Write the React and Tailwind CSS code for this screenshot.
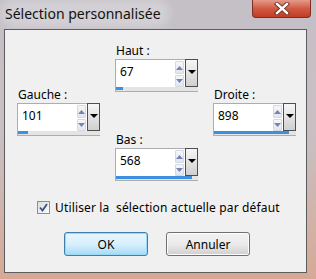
import React from "react";

// Boîte de dialogue Windows 7 : "Sélection personnalisée"

const FONT = { fontFamily: '"Noto Sans", "Open Sans", sans-serif' };

function Spin({ label, value, fill, className = "" }) {
  return (
    <div className={`flex flex-col ${className}`}>
      <span className="h-[15px] text-[12px] leading-[15px] text-black pl-px">{label}</span>
      <div className="mt-[1px] flex w-[83px] flex-col">
        <div className="flex h-[28px]">
          <div className="flex flex-1 border-l border-t border-[#abadb3] bg-white">
            <span className="flex-1 pl-[4px] pt-[4px] text-[12px] leading-[15px] text-black">{value}</span>
            <div className="mr-[1px] mt-[1px] flex w-[9px] flex-col gap-px">
              <div className="flex h-[13px] items-center justify-center rounded-[1px] border border-[#d3d8e2] bg-gradient-to-b from-[#f6f7fa] to-[#e3e6ee]">
                <svg width="7" height="4" viewBox="0 0 7 4"><path d="M0 4 L3.5 0 L7 4 Z" fill="#7482b6" /></svg>
              </div>
              <div className="flex h-[12px] items-center justify-center rounded-[1px] border border-[#d3d8e2] bg-gradient-to-b from-[#f6f7fa] to-[#e3e6ee]">
                <svg width="7" height="4" viewBox="0 0 7 4"><path d="M0 0 L3.5 4 L7 0 Z" fill="#7482b6" /></svg>
              </div>
            </div>
          </div>
          <div className="flex w-[13px] justify-center border border-[#4e4e4e] bg-gradient-to-b from-[#f6f6f6] to-[#d0d0d0] pt-[10px]">
            <svg width="8" height="4" viewBox="0 0 8 4"><path d="M0 0 L4 4 L8 0 Z" fill="#000" /></svg>
          </div>
        </div>
        <div className="h-[5px] border-b border-l border-[#abadb3] bg-[#e4e4e4]">
          <div className="h-[3px] bg-[#3d8fe0]" style={{ width: fill }} />
        </div>
      </div>
    </div>
  );
}

export default function App() {
  return (
    <div
      className="flex h-[279px] w-[316px] flex-col bg-gradient-to-b from-[#c4c0c7] via-[#c8bfc2] to-[#d6a995]"
      style={FONT}
    >
      {/* Barre de titre */}
      <div className="flex h-[29px] items-start">
        <span className="ml-[5px] mt-[4px] rounded-[10px] bg-[#dcdadd]/60 pr-[4px] text-[14px] leading-[19px] text-[#111] shadow-[0_0_8px_5px_rgba(220,218,221,0.6)]">
          Sélection personnalisée
        </span>
        <div className="ml-auto mr-[5px] flex h-[18px] w-[59px] items-center justify-center rounded-b-[4px] border border-t-0 border-[#7d2f24] bg-gradient-to-b from-[#e49a8a] via-[#d05a44] to-[#c23a22]">
          <svg width="16" height="13" viewBox="0 0 16 13">
            <path d="M3 2 L13 11 M13 2 L3 11" stroke="#6a2a22" strokeWidth="4.2" strokeLinecap="square" />
            <path d="M3 2 L13 11 M13 2 L3 11" stroke="#fff" strokeWidth="2.4" strokeLinecap="square" />
          </svg>
        </div>
      </div>

      {/* Zone cliente */}
      <div className="ml-[4px] h-[244px] w-[303px] border border-[#5c5c5c] bg-[#f0f0f0] text-[12px] text-black">
        <div className="flex gap-[15px] pl-[12px]">
          <Spin label="Gauche :" value="101" fill="10px" className="mt-[57px]" />
          <div className="flex flex-col">
            <Spin label="Haut :" value="67" fill="7px" className="mt-[13px]" />
            <Spin label="Bas :" value="568" fill="76px" className="mt-[40px]" />
          </div>
          <Spin label="Droite :" value="898" fill="75px" className="mt-[57px]" />
        </div>

        <div className="mt-[19px] flex items-center pl-[32px]">
          <div className="flex h-[13px] w-[13px] items-center justify-center border border-[#8e8f8f] bg-gradient-to-br from-[#dcdcdc] to-[#fbfbfb]">
            <svg width="9" height="9" viewBox="0 0 9 9">
              <path d="M1 4.5 L3.5 7.5 L8 1" stroke="#3a4f86" strokeWidth="1.8" fill="none" />
            </svg>
          </div>
          <span className="ml-[5px] whitespace-pre text-[12px] leading-[15px] tracking-[0.15px]">Utiliser la  sélection actuelle par défaut</span>
        </div>

        <div className="mt-[17px] flex gap-[18px] pl-[59px]">
          <button className="h-[24px] w-[84px] rounded-[3px] border border-[#3c7fb1] bg-gradient-to-b from-[#eaf6fd] via-[#d9f0fc] to-[#a7d9f5] text-[12px] leading-[15px] shadow-[inset_0_0_0_1px_#97d8f6]">
            OK
          </button>
          <button className="h-[24px] w-[84px] rounded-[3px] border border-[#707070] bg-gradient-to-b from-[#f2f2f2] via-[#ebebeb] to-[#cfcfcf] text-[12px] leading-[15px] shadow-[inset_0_0_0_1px_#fcfcfc]">
            Annuler
          </button>
        </div>
      </div>
    </div>
  );
}
